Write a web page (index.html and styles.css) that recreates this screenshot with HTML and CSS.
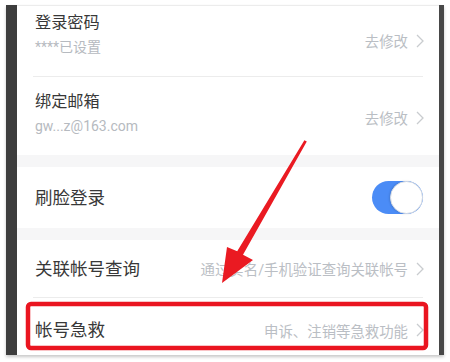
FILE: index.html
```html
<!DOCTYPE html>
<html lang="zh-CN">
<head>
    <meta charset="UTF-8">
    <meta name="viewport" content="width=device-width, initial-scale=1.0">
    <title>帐号与安全</title>
    <link rel="stylesheet" href="styles.css">
</head>
<body>
    <div class="device">
        <div class="screen">
            <div class="group">
                <div class="row row-first">
                    <div class="row-text">
                        <div class="title">登录密码</div>
                        <div class="sub">****已设置</div>
                    </div>
                    <div class="action">去修改 <svg class="chevron" viewBox="0 0 8 14"><polyline points="1,1 7,7 1,13"/></svg></div>
                </div>
                <div class="row row-tall">
                    <div class="row-text">
                        <div class="title">绑定邮箱</div>
                        <div class="sub">gw...z@163.com</div>
                    </div>
                    <div class="action">去修改 <svg class="chevron" viewBox="0 0 8 14"><polyline points="1,1 7,7 1,13"/></svg></div>
                </div>
            </div>

            <div class="group">
                <div class="row row-single">
                    <div class="title">刷脸登录</div>
                    <div class="switch on"><span class="knob"></span></div>
                </div>
            </div>

            <div class="group">
                <div class="row row-single row-query">
                    <div class="title">关联帐号查询</div>
                    <div class="action">通过实名/手机验证查询关联帐号 <svg class="chevron" viewBox="0 0 8 14"><polyline points="1,1 7,7 1,13"/></svg></div>
                </div>
                <div class="row row-single row-last">
                    <div class="title">帐号急救</div>
                    <div class="action">申诉、注销等急救功能 <svg class="chevron" viewBox="0 0 8 14"><polyline points="1,1 7,7 1,13"/></svg></div>
                </div>
            </div>
        </div>
    </div>

    <!-- annotation layer drawn over the screenshot -->
    <svg class="marks" viewBox="0 0 450 362">
        <rect class="mark-box" x="28" y="304" width="398" height="44" rx="3"/>
        <polygon class="mark-arrow" points="304.4,140.2 306.8,141.6 243,254.8 253,260 222,283 227,247 237.2,251.2"/>
    </svg>
</body>
</html>
```

FILE: styles.css
```css
* {
    box-sizing: border-box;
    margin: 0;
    padding: 0;
}

body {
    font-family: Roboto, "Noto Sans CJK SC", "Noto Sans", sans-serif;
    background-color: #ffffff;
    width: 450px;
    height: 362px;
    position: relative;
    overflow: hidden;
}

.device {
    margin: 5px 0 0 6px;
    width: 438px;
    height: 350px;
    border-left: 11px solid #3d3d3d;
    border-right: 5px solid #484848;
    box-shadow: 0 2px 3px rgba(0, 0, 0, 0.22);
    overflow: hidden;
    background-color: #f6f6f7;
}

.screen {
    border-top: 1px solid #ececec;
}

.group {
    background-color: #ffffff;
    margin-bottom: 12px;
}

.row {
    display: flex;
    align-items: center;
    justify-content: space-between;
    padding: 0 15px 0 18px;
    position: relative;
}

.row + .row::before {
    content: "";
    position: absolute;
    top: 0;
    left: 16px;
    right: 16px;
    border-top: 1px solid #ececec;
}

.row-first {
    height: 70px;
    padding-top: 1px;
    align-items: flex-start;
}

.row-first .row-text {
    padding-top: 5px;
}

.row-first .action {
    margin-top: 23px;
}

.row-tall {
    height: 79px;
    align-items: flex-start;
}

.row-tall .row-text {
    padding-top: 15px;
}

.row-tall .action {
    margin-top: 31px;
}

.row-single {
    height: 61px;
}

.row-single .title {
    font-size: 17.5px;
}

.row-query {
    height: 57px;
}

.row-last {
    height: 66px;
}

.title {
    font-size: 16.2px;
    line-height: 22px;
    color: #383838;
}

.sub {
    font-size: 14px;
    line-height: 18px;
    margin-top: 4px;
    color: #b6bac0;
}

.action {
    display: flex;
    align-items: center;
    gap: 8px;
    font-size: 14.4px;
    color: #babec4;
    white-space: nowrap;
}

.chevron {
    width: 8px;
    height: 14px;
    fill: none;
    stroke: #c9cccf;
    stroke-width: 1.3;
}

.switch {
    width: 51px;
    height: 33px;
    border-radius: 17px;
    background-color: #4b8cf6;
    position: relative;
    margin-right: 1px;
}

.switch .knob {
    position: absolute;
    top: 0;
    right: 0;
    width: 33px;
    height: 33px;
    border-radius: 50%;
    background-color: #ffffff;
    border: 1px solid #d8dde4;
    box-shadow: -1px 0 2px rgba(0, 0, 0, 0.12);
}

.marks {
    position: absolute;
    top: 0;
    left: 0;
    width: 450px;
    height: 362px;
    pointer-events: none;
}

.mark-box {
    fill: none;
    stroke: #ea1520;
    stroke-width: 4.5;
}

.mark-arrow {
    fill: #ea1a22;
}
```
